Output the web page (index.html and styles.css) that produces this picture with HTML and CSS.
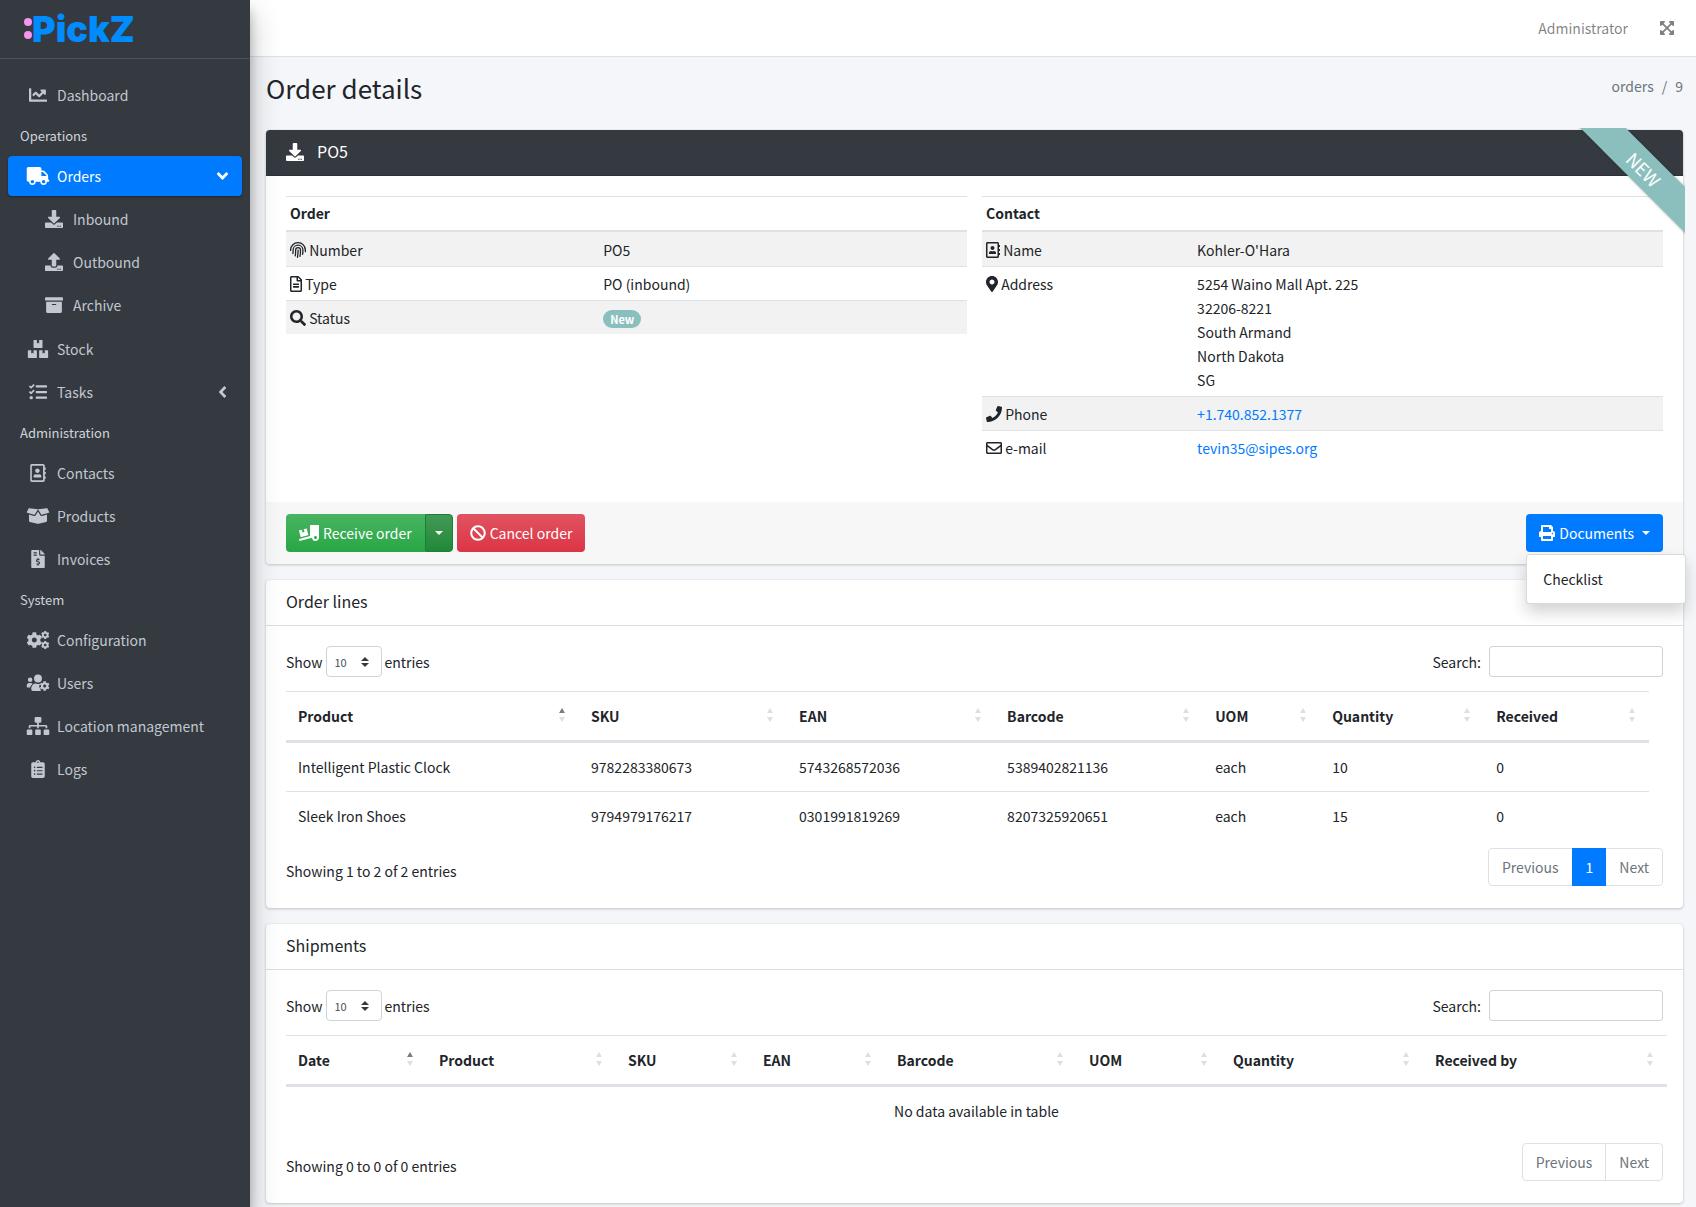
FILE: index.html
```html
<!DOCTYPE html>
<html lang="en">
<head>
    <meta charset="UTF-8">
    <meta name="viewport" content="width=device-width, initial-scale=1.0">
    <title>PickZ | Order details</title>
    <link rel="stylesheet" href="styles.css">
</head>
<body>
    <!-- shared icon shapes -->
    <svg class="sprite" aria-hidden="true">
        <symbol id="download" viewBox="0 0 512 512"><path d="M216 0h80c13.3 0 24 10.7 24 24v168h87.7c17.8 0 26.7 21.5 14.1 34.1L269.7 378.3c-7.5 7.5-19.8 7.5-27.3 0L90.1 226.1c-12.6-12.6-3.7-34.1 14.1-34.1H192V24c0-13.3 10.7-24 24-24zm296 376v112c0 13.3-10.7 24-24 24H24c-13.3 0-24-10.7-24-24V376c0-13.3 10.7-24 24-24h146.7l49 49c20.1 20.1 52.5 20.1 72.6 0l49-49H488c13.3 0 24 10.7 24 24zm-124 88c0-11-9-20-20-20s-20 9-20 20 9 20 20 20 20-9 20-20zm64 0c0-11-9-20-20-20s-20 9-20 20 9 20 20 20 20-9 20-20z"/></symbol>
        <symbol id="address-book" viewBox="0 0 448 512"><path d="M436 160c6.6 0 12-5.4 12-12v-40c0-6.6-5.4-12-12-12h-20V48c0-26.5-21.5-48-48-48H48C21.5 0 0 21.5 0 48v416c0 26.5 21.5 48 48 48h320c26.5 0 48-21.5 48-48v-48h20c6.6 0 12-5.4 12-12v-40c0-6.6-5.4-12-12-12h-20v-64h20c6.6 0 12-5.4 12-12v-40c0-6.6-5.4-12-12-12h-20v-64h20zm-68 304H48V48h320v416zM208 256c35.3 0 64-28.7 64-64s-28.7-64-64-64-64 28.7-64 64 28.7 64 64 64zm-89.6 128h179.2c12.4 0 22.4-8.6 22.4-19.2v-19.2c0-31.8-30.1-57.6-67.2-57.6-10.8 0-18.7 8-44.8 8-26.9 0-33.4-8-44.8-8-37.1 0-67.2 25.8-67.2 57.6v19.2c0 10.6 10 19.2 22.4 19.2z"/></symbol>
        <symbol id="angle" viewBox="0 0 256 512"><path d="M31.7 239l136-136c9.4-9.4 24.6-9.4 33.9 0l22.6 22.6c9.4 9.4 9.4 24.6 0 33.9L127.9 256l96.4 96.4c9.4 9.4 9.4 24.6 0 33.9L201.7 409c-9.4 9.4-24.6 9.4-33.9 0l-136-136c-9.5-9.4-9.5-24.6-.1-34z"/></symbol>
        <symbol id="cog" viewBox="0 0 512 512"><path d="M487.4 315.7l-42.6-24.6c4.3-23.2 4.3-47 0-70.2l42.6-24.6c4.9-2.8 7.1-8.6 5.5-14-11.1-35.6-30-67.8-54.7-94.6-3.8-4.1-10-5.1-14.8-2.3L380.8 110c-17.9-15.4-38.5-27.3-60.8-35.1V25.8c0-5.6-3.9-10.5-9.4-11.7-36.7-8.2-74.3-7.8-109.2 0-5.5 1.2-9.4 6.1-9.4 11.7V75c-22.2 7.9-42.8 19.8-60.8 35.1L88.7 85.5c-4.9-2.8-11-1.9-14.8 2.3-24.7 26.7-43.6 58.9-54.7 94.6-1.7 5.4.6 11.2 5.5 14L67.3 221c-4.3 23.2-4.3 47 0 70.2l-42.6 24.6c-4.9 2.8-7.1 8.6-5.5 14 11.1 35.6 30 67.8 54.7 94.6 3.8 4.1 10 5.1 14.8 2.3l42.6-24.6c17.9 15.4 38.5 27.3 60.8 35.1v49.2c0 5.6 3.9 10.5 9.4 11.7 36.7 8.2 74.3 7.8 109.2 0 5.5-1.2 9.4-6.1 9.4-11.7v-49.2c22.2-7.9 42.8-19.8 60.8-35.1l42.6 24.6c4.9 2.8 11 1.9 14.8-2.3 24.7-26.7 43.6-58.9 54.7-94.6 1.5-5.5-.7-11.3-5.6-14.1zM256 336c-44.1 0-80-35.9-80-80s35.9-80 80-80 80 35.9 80 80-35.9 80-80 80z"/></symbol>
    </svg>

    <aside class="sidebar">
        <a href="#" class="brand">
            <svg class="brand-dots" viewBox="0 0 8 22" aria-hidden="true"><circle cx="4" cy="4" r="4"/><circle cx="4" cy="17" r="4"/></svg>
            <span>PickZ</span>
        </a>
        <nav>
            <ul class="nav">
                <li><a href="#"><svg viewBox="0 0 512 512"><path d="M496 384H64V80c0-8.84-7.16-16-16-16H16C7.16 64 0 71.16 0 80v336c0 17.67 14.33 32 32 32h464c8.84 0 16-7.16 16-16v-32c0-8.84-7.16-16-16-16zM464 96H345.94c-21.38 0-32.09 25.85-16.97 40.97l32.4 32.4L288 242.75l-73.37-73.37c-12.5-12.5-32.76-12.5-45.25 0l-68.69 68.69c-6.25 6.25-6.25 16.38 0 22.63l22.62 22.62c6.25 6.25 16.38 6.25 22.63 0L192 237.25l73.37 73.37c12.5 12.5 32.76 12.5 45.25 0l96-96 32.4 32.4c15.12 15.12 40.97 4.41 40.97-16.97V112c.01-8.84-7.15-16-15.99-16z"/></svg><span>Dashboard</span></a></li>
                <li class="nav-header">Operations</li>
                <li>
                    <a href="#" class="active"><svg viewBox="0 0 640 512"><path d="M624 352h-16V243.9c0-12.7-5.1-24.9-14.1-33.9L494 110.1c-9-9-21.2-14.1-33.9-14.1H416V48c0-26.5-21.5-48-48-48H48C21.5 0 0 21.5 0 48v320c0 26.5 21.5 48 48 48h16c0 53 43 96 96 96s96-43 96-96h128c0 53 43 96 96 96s96-43 96-96h48c8.8 0 16-7.2 16-16v-32c0-8.8-7.2-16-16-16zM160 464c-26.5 0-48-21.5-48-48s21.5-48 48-48 48 21.5 48 48-21.5 48-48 48zm320 0c-26.5 0-48-21.5-48-48s21.5-48 48-48 48 21.5 48 48-21.5 48-48 48zm80-208H416V144h44.1l99.9 99.9V256z"/></svg><span>Orders</span><svg class="angle open" viewBox="0 0 256 512"><use href="#angle"/></svg></a>
                    <ul class="nav-sub">
                        <li><a href="#"><svg viewBox="0 0 512 512"><use href="#download"/></svg><span>Inbound</span></a></li>
                        <li><a href="#"><svg viewBox="0 0 512 512"><path d="M296 384h-80c-13.3 0-24-10.7-24-24V192h-87.7c-17.8 0-26.7-21.5-14.1-34.1L242.3 5.7c7.5-7.5 19.8-7.5 27.3 0l152.2 152.2c12.6 12.6 3.7 34.1-14.1 34.1H320v168c0 13.3-10.7 24-24 24zm216-8v112c0 13.3-10.7 24-24 24H24c-13.3 0-24-10.7-24-24V376c0-13.3 10.7-24 24-24h136v8c0 30.9 25.1 56 56 56h80c30.9 0 56-25.1 56-56v-8h136c13.3 0 24 10.7 24 24zm-124 88c0-11-9-20-20-20s-20 9-20 20 9 20 20 20 20-9 20-20zm64 0c0-11-9-20-20-20s-20 9-20 20 9 20 20 20 20-9 20-20z"/></svg><span>Outbound</span></a></li>
                        <li><a href="#"><svg viewBox="0 0 512 512"><path d="M32 448c0 17.7 14.3 32 32 32h384c17.7 0 32-14.3 32-32V160H32v288zm160-212c0-6.6 5.4-12 12-12h104c6.6 0 12 5.4 12 12v8c0 6.6-5.4 12-12 12H204c-6.6 0-12-5.4-12-12v-8zM480 32H32C14.3 32 0 46.3 0 64v48c0 8.8 7.2 16 16 16h480c8.8 0 16-7.2 16-16V64c0-17.7-14.3-32-32-32z"/></svg><span>Archive</span></a></li>
                    </ul>
                </li>
                <li><a href="#"><svg viewBox="0 0 576 512"><path d="M560 288h-80v96l-32-21.3-32 21.3v-96h-80c-8.8 0-16 7.2-16 16v192c0 8.8 7.2 16 16 16h224c8.8 0 16-7.2 16-16V304c0-8.8-7.2-16-16-16zm-384-64h224c8.8 0 16-7.2 16-16V16c0-8.8-7.2-16-16-16h-80v96l-32-21.3L256 96V0h-80c-8.8 0-16 7.2-16 16v192c0 8.8 7.2 16 16 16zm64 64h-80v96l-32-21.3L96 384v-96H16c-8.8 0-16 7.2-16 16v192c0 8.8 7.2 16 16 16h224c8.8 0 16-7.2 16-16V304c0-8.8-7.2-16-16-16z"/></svg><span>Stock</span></a></li>
                <li><a href="#"><svg viewBox="0 0 512 512"><path d="M139.61 35.5a12 12 0 0 0-17 0L58.93 98.81l-22.7-22.12a12 12 0 0 0-17 0L3.53 92.41a12 12 0 0 0 0 17l47.59 47.4a12.78 12.78 0 0 0 17.61 0l15.59-15.62L156.52 69a12.09 12.09 0 0 0 .09-17zm0 159.19a12 12 0 0 0-17 0l-63.68 63.72-22.7-22.1a12 12 0 0 0-17 0L3.53 252a12 12 0 0 0 0 17L51 316.5a12.77 12.77 0 0 0 17.6 0l15.7-15.69 72.2-72.22a12 12 0 0 0 .09-16.9zM64 368c-26.49 0-48.59 21.5-48.59 48S37.53 464 64 464a48 48 0 0 0 0-96zm432 16H208a16 16 0 0 0-16 16v32a16 16 0 0 0 16 16h288a16 16 0 0 0 16-16v-32a16 16 0 0 0-16-16zm0-320H208a16 16 0 0 0-16 16v32a16 16 0 0 0 16 16h288a16 16 0 0 0 16-16V80a16 16 0 0 0-16-16zm0 160H208a16 16 0 0 0-16 16v32a16 16 0 0 0 16 16h288a16 16 0 0 0 16-16v-32a16 16 0 0 0-16-16z"/></svg><span>Tasks</span><svg class="angle" viewBox="0 0 256 512"><use href="#angle"/></svg></a></li>
                <li class="nav-header">Administration</li>
                <li><a href="#"><svg viewBox="0 0 448 512"><use href="#address-book"/></svg><span>Contacts</span></a></li>
                <li><a href="#"><svg viewBox="0 0 640 512"><path d="M425.7 256c-16.9 0-32.8-9-41.4-23.4L320 126l-64.2 106.6c-8.7 14.5-24.6 23.5-41.5 23.5-4.5 0-9-.6-13.3-1.9L64 215v178c0 14.7 10 27.5 24.2 31l216.2 54.1c10.2 2.5 20.9 2.5 31 0L551.8 424c14.2-3.6 24.2-16.4 24.2-31V215l-137 39.1c-4.3 1.3-8.8 1.9-13.3 1.9zm212.6-112.2L586.8 41c-3.1-6.2-9.8-9.8-16.7-8.9L320 64l91.7 152.1c3.8 6.3 11.4 9.3 18.5 7.3l197.9-56.5c9.9-2.9 14.7-13.9 10.2-23.1zM53.2 41L1.7 143.8c-4.6 9.2.3 20.2 10.1 23l197.9 56.5c7.1 2 14.7-1 18.5-7.3L320 64 69.8 32.1c-6.9-.8-13.5 2.7-16.6 8.9z"/></svg><span>Products</span></a></li>
                <li><a href="#"><svg viewBox="0 0 384 512"><path d="M377 105L279.1 7c-4.5-4.5-10.6-7-17-7H256v128h128v-6.1c0-6.3-2.5-12.4-7-16.9zm-153 31V0H24C10.7 0 0 10.7 0 24v464c0 13.3 10.7 24 24 24h336c13.3 0 24-10.7 24-24V160H248c-13.2 0-24-10.8-24-24zM64 72c0-4.42 3.58-8 8-8h80c4.42 0 8 3.58 8 8v16c0 4.42-3.58 8-8 8H72c-4.42 0-8-3.58-8-8V72zm0 80v-16c0-4.42 3.58-8 8-8h80c4.42 0 8 3.58 8 8v16c0 4.42-3.58 8-8 8H72c-4.42 0-8-3.58-8-8zm144 263.88V440c0 4.42-3.58 8-8 8h-16c-4.42 0-8-3.58-8-8v-24.29c-11.29-.58-22.27-4.52-31.37-11.35-3.9-2.93-4.1-8.77-.57-12.14l11.75-11.21c2.77-2.64 6.89-2.76 10.13-.73 3.87 2.42 8.26 3.72 12.82 3.72h28.11c6.5 0 11.8-5.92 11.8-13.19 0-5.95-3.61-11.19-8.77-12.73l-45-13.5c-18.59-5.58-31.58-23.42-31.58-43.39 0-24.52 19.05-44.44 42.67-45.07V232c0-4.42 3.58-8 8-8h16c4.42 0 8 3.58 8 8v24.29c11.29.58 22.27 4.51 31.37 11.35 3.9 2.93 4.1 8.77.57 12.14l-11.75 11.21c-2.77 2.64-6.89 2.76-10.13.73-3.87-2.43-8.26-3.72-12.82-3.72h-28.11c-6.5 0-11.8 5.92-11.8 13.19 0 5.95 3.61 11.19 8.77 12.73l45 13.5c18.59 5.58 31.58 23.42 31.58 43.39 0 24.53-19.05 44.44-42.67 45.07z"/></svg><span>Invoices</span></a></li>
                <li class="nav-header">System</li>
                <li><a href="#"><svg viewBox="0 0 640 512"><use href="#cog" x="-12" y="30" width="456" height="456"/><use href="#cog" x="404" y="-8" width="242" height="242"/><use href="#cog" x="404" y="278" width="242" height="242"/></svg><span>Configuration</span></a></li>
                <li><a href="#"><svg viewBox="0 0 640 512"><circle cx="96" cy="160" r="64"/><circle cx="320" cy="128" r="112"/><path d="M168 284c-12-17-31-28-52-28H64c-35 0-64 29-64 64v32c0 18 14 32 32 32h66c7-42 32-78 70-100zM128 432c0-86 50-160 124-160h8c40 20 84 20 124 0h8l-34 56c-6 34 0 66 30 86v22c0 12 8 34 18 44H176c-27 0-48-21-48-48z"/><use href="#cog" x="368" y="200" width="284" height="284"/></svg><span>Users</span></a></li>
                <li><a href="#"><svg viewBox="0 0 640 512"><path d="M128 352H32c-17.67 0-32 14.33-32 32v96c0 17.67 14.33 32 32 32h96c17.67 0 32-14.33 32-32v-96c0-17.67-14.33-32-32-32zm-24-80h192v48h48v-48h192v48h48v-57.59c0-21.17-17.23-38.41-38.41-38.41H344v-64h40c17.67 0 32-14.33 32-32V32c0-17.67-14.33-32-32-32H256c-17.67 0-32 14.33-32 32v96c0 17.67 14.33 32 32 32h40v64H94.41C73.23 224 56 241.23 56 262.41V320h48v-48zm264 80h-96c-17.67 0-32 14.33-32 32v96c0 17.67 14.33 32 32 32h96c17.67 0 32-14.33 32-32v-96c0-17.67-14.33-32-32-32zm240 0h-96c-17.67 0-32 14.33-32 32v96c0 17.67 14.33 32 32 32h96c17.67 0 32-14.33 32-32v-96c0-17.67-14.33-32-32-32z"/></svg><span>Location management</span></a></li>
                <li><a href="#"><svg viewBox="0 0 384 512"><path d="M336 64h-80c0-35.3-28.7-64-64-64s-64 28.7-64 64H48C21.5 64 0 85.5 0 112v352c0 26.5 21.5 48 48 48h288c26.5 0 48-21.5 48-48V112c0-26.5-21.5-48-48-48zM96 424c-13.3 0-24-10.7-24-24s10.7-24 24-24 24 10.7 24 24-10.7 24-24 24zm0-96c-13.3 0-24-10.7-24-24s10.7-24 24-24 24 10.7 24 24-10.7 24-24 24zm0-96c-13.3 0-24-10.7-24-24s10.7-24 24-24 24 10.7 24 24-10.7 24-24 24zm96-192c13.3 0 24 10.7 24 24s-10.7 24-24 24-24-10.7-24-24 10.7-24 24-24zm128 368c0 4.4-3.6 8-8 8H168c-4.4 0-8-3.6-8-8v-16c0-4.4 3.6-8 8-8h144c4.4 0 8 3.6 8 8v16zm0-96c0 4.4-3.6 8-8 8H168c-4.4 0-8-3.6-8-8v-16c0-4.4 3.6-8 8-8h144c4.4 0 8 3.6 8 8v16zm0-96c0 4.4-3.6 8-8 8H168c-4.4 0-8-3.6-8-8v-16c0-4.4 3.6-8 8-8h144c4.4 0 8 3.6 8 8v16z"/></svg><span>Logs</span></a></li>
            </ul>
        </nav>
    </aside>

    <div class="wrapper">
        <header class="topbar">
            <a href="#">Administrator</a>
            <a href="#" aria-label="Full screen"><svg class="icon-expand" viewBox="0 0 448 512"><path d="M448 344v112a23.94 23.94 0 0 1-24 24H312c-21.39 0-32.09-25.9-17-41l36.2-36.2L224 295.6 116.77 402.9 153 439c15.09 15.1 4.39 41-17 41H24a23.94 23.94 0 0 1-24-24V344c0-21.4 25.89-32.1 41-17l36.19 36.2L184.46 256 77.18 148.7 41 185c-15.1 15.1-41 4.4-41-17V56a23.94 23.94 0 0 1 24-24h112c21.39 0 32.09 25.9 17 41l-36.2 36.2L224 216.4l107.23-107.3L295 73c-15.09-15.1-4.39-41 17-41h112a23.94 23.94 0 0 1 24 24v112c0 21.4-25.89 32.1-41 17l-36.19-36.2L263.54 256l107.28 107.3L407 327.1c15.1-15.2 41-4.5 41 16.9z"/></svg></a>
        </header>

        <main class="content">
            <div class="page-head">
                <h1>Order details</h1>
                <ol class="breadcrumb">
                    <li><a href="#">orders</a></li>
                    <li>9</li>
                </ol>
            </div>

            <section class="card">
                <div class="card-header dark">
                    <svg viewBox="0 0 512 512"><use href="#download"/></svg>
                    <h2>PO5</h2>
                </div>
                <div class="ribbon-wrapper"><div class="ribbon">NEW</div></div>
                <div class="card-body details">
                    <table class="info order-info">
                        <colgroup><col class="label-col"><col></colgroup>
                        <thead>
                            <tr><th colspan="2">Order</th></tr>
                        </thead>
                        <tbody>
                            <tr>
                                <td><svg class="finger" viewBox="0 0 512 512"><path d="M20 270C14 130 120 22 256 22s238 104 236 250v36M92 370c10-36 8-70 8-112 0-86 68-156 156-156s158 70 158 160c0 50-2 90-12 130M168 444c14-60 12-110 12-182 0-44 34-80 78-80s78 36 78 80c0 80-4 140-18 196M258 258c0 90-4 160-20 230"/></svg> Number</td>
                                <td>PO5</td>
                            </tr>
                            <tr>
                                <td><svg viewBox="0 0 384 512"><path d="M288 248v28c0 6.6-5.4 12-12 12H108c-6.6 0-12-5.4-12-12v-28c0-6.6 5.4-12 12-12h168c6.6 0 12 5.4 12 12zm-12 72H108c-6.6 0-12 5.4-12 12v28c0 6.6 5.4 12 12 12h168c6.6 0 12-5.4 12-12v-28c0-6.6-5.4-12-12-12zm108-188.1V464c0 26.5-21.5 48-48 48H48c-26.5 0-48-21.5-48-48V48C0 21.5 21.5 0 48 0h204.1C264.8 0 277 5.1 286 14.1L369.9 98c9 8.9 14.1 21.2 14.1 33.9zm-128-80V128h76.1L256 51.9zM336 464V176H232c-13.3 0-24-10.7-24-24V48H48v416h288z"/></svg> Type</td>
                                <td>PO (inbound)</td>
                            </tr>
                            <tr>
                                <td><svg viewBox="0 0 512 512"><path d="M505 442.7L405.3 343c-4.5-4.5-10.6-7-17-7H372c27.6-35.3 44-79.7 44-128C416 93.1 322.9 0 208 0S0 93.1 0 208s93.1 208 208 208c48.3 0 92.7-16.4 128-44v16.3c0 6.4 2.5 12.5 7 17l99.7 99.7c9.4 9.4 24.6 9.4 33.9 0l28.3-28.3c9.4-9.4 9.4-24.6.1-34zM208 336c-70.7 0-128-57.2-128-128 0-70.7 57.2-128 128-128 70.7 0 128 57.2 128 128 0 70.7-57.2 128-128 128z"/></svg> Status</td>
                                <td><span class="badge">New</span></td>
                            </tr>
                        </tbody>
                    </table>
                    <table class="info contact-info">
                        <colgroup><col class="label-col"><col></colgroup>
                        <thead>
                            <tr><th colspan="2">Contact</th></tr>
                        </thead>
                        <tbody>
                            <tr>
                                <td><svg viewBox="0 0 448 512"><use href="#address-book"/></svg> Name</td>
                                <td>Kohler-O'Hara</td>
                            </tr>
                            <tr>
                                <td><svg viewBox="0 0 384 512"><path d="M172.268 501.67C26.97 291.031 0 269.413 0 192 0 85.961 85.961 0 192 0s192 85.961 192 192c0 77.413-26.97 99.031-172.268 309.67-9.535 13.774-29.93 13.773-39.464 0zM192 272c44.183 0 80-35.817 80-80s-35.817-80-80-80-80 35.817-80 80 35.817 80 80 80z"/></svg> Address</td>
                                <td>5254 Waino Mall Apt. 225<br>32206-8221<br>South Armand<br>North Dakota<br>SG</td>
                            </tr>
                            <tr>
                                <td><svg viewBox="0 0 512 512"><path d="M493.4 24.6l-104-24c-11.3-2.6-22.9 3.3-27.5 13.9l-48 112c-4.2 9.8-1.4 21.3 6.9 28l60.6 49.6c-36 76.7-98.9 140.5-177.2 177.2l-49.6-60.6c-6.8-8.3-18.2-11.1-28-6.9l-112 48C3.9 366.5-2 378.1.6 389.4l24 104C27.1 504.2 36.7 512 48 512c256.1 0 464-207.5 464-464 0-11.2-7.7-20.9-18.6-23.4z"/></svg> Phone</td>
                                <td><a href="tel:+17408521377">+1.740.852.1377</a></td>
                            </tr>
                            <tr>
                                <td><svg viewBox="0 0 512 512"><path d="M464 64H48C21.49 64 0 85.49 0 112v288c0 26.51 21.49 48 48 48h416c26.51 0 48-21.49 48-48V112c0-26.51-21.49-48-48-48zm0 48v40.805c-22.422 18.259-58.168 46.651-134.587 106.49-16.841 13.247-50.201 45.072-73.413 44.701-23.208.375-56.579-31.459-73.413-44.701C106.18 199.465 70.425 171.067 48 152.805V112h416zM48 400V214.398c22.914 18.251 55.409 43.862 104.938 82.646 21.857 17.205 60.134 55.186 103.062 54.955 42.717.231 80.509-37.199 103.053-54.947 49.528-38.783 82.032-64.401 104.947-82.653V400H48z"/></svg> e-mail</td>
                                <td><a href="mailto:tevin35@sipes.org">tevin35@sipes.org</a></td>
                            </tr>
                        </tbody>
                    </table>
                </div>
                <div class="card-footer">
                    <div class="btn-group">
                        <button type="button" class="btn btn-success"><svg viewBox="0 0 640 512"><path d="M50.2 375.6c2.3 8.5 11.1 13.6 19.6 11.3l216.4-58c8.5-2.3 13.6-11.1 11.3-19.6l-49.7-185.5c-2.3-8.5-11.1-13.6-19.6-11.3L151 133.3l24.8 92.7-61.8 16.5-24.8-92.7-77.3 20.7C3.4 172.8-1.7 181.6.6 190.1l49.6 185.5zM384 0c-17.7 0-32 14.3-32 32v323.6L5.9 450c-4.3 1.2-6.8 5.6-5.6 9.8l12.6 46.3c1.2 4.3 5.6 6.8 9.8 5.6l393.7-107.4C418.8 464.1 467.6 512 528 512c61.9 0 112-50.1 112-112V0H384zm144 448c-26.5 0-48-21.5-48-48s21.5-48 48-48 48 21.5 48 48-21.5 48-48 48z"/></svg>Receive order</button>
                        <button type="button" class="btn btn-split" aria-label="More receive options"><span class="caret"></span></button>
                    </div>
                    <button type="button" class="btn btn-danger"><svg viewBox="0 0 512 512"><path d="M256 8C119.034 8 8 119.033 8 256s111.034 248 248 248 248-111.034 248-248S392.967 8 256 8zm130.108 117.892c65.448 65.448 70 165.481 20.677 235.637L150.47 105.216c70.204-49.356 170.226-44.735 235.638 20.676zM125.892 386.108c-65.448-65.448-70-165.481-20.677-235.637L361.53 406.784c-70.203 49.356-170.226 44.736-235.638-20.676z"/></svg>Cancel order</button>
                    <div class="dropdown">
                        <button type="button" class="btn btn-primary" aria-expanded="true"><svg viewBox="0 0 512 512"><path d="M448 192V77.25c0-8.49-3.37-16.62-9.37-22.63L393.37 9.37c-6-6-14.14-9.37-22.63-9.37H96C78.33 0 64 14.33 64 32v160c-35.35 0-64 28.65-64 64v112c0 8.84 7.16 16 16 16h48v96c0 17.67 14.33 32 32 32h320c17.67 0 32-14.33 32-32v-96h48c8.84 0 16-7.16 16-16V256c0-35.35-28.65-64-64-64zm-64 256H128v-96h256v96zm0-224H128V64h192v48c0 8.84 7.16 16 16 16h48v96zm48 72c-13.25 0-24-10.75-24-24 0-13.26 10.75-24 24-24s24 10.74 24 24c0 13.25-10.75 24-24 24z"/></svg>Documents<span class="caret"></span></button>
                        <div class="dropdown-menu">
                            <a href="#">Checklist</a>
                        </div>
                    </div>
                </div>
            </section>

            <section class="card">
                <div class="card-header"><h2>Order lines</h2></div>
                <div class="card-body">
                    <div class="table-tools">
                        <label>Show <select><option>10</option><option>25</option><option>50</option></select> entries</label>
                        <label>Search: <input type="search"></label>
                    </div>
                    <table class="data lines">
                        <thead>
                            <tr>
                                <th class="asc">Product</th>
                                <th>SKU</th>
                                <th>EAN</th>
                                <th>Barcode</th>
                                <th>UOM</th>
                                <th>Quantity</th>
                                <th>Received</th>
                            </tr>
                        </thead>
                        <tbody>
                            <tr>
                                <td>Intelligent Plastic Clock</td>
                                <td>9782283380673</td>
                                <td>5743268572036</td>
                                <td>5389402821136</td>
                                <td>each</td>
                                <td>10</td>
                                <td>0</td>
                            </tr>
                            <tr>
                                <td>Sleek Iron Shoes</td>
                                <td>9794979176217</td>
                                <td>0301991819269</td>
                                <td>8207325920651</td>
                                <td>each</td>
                                <td>15</td>
                                <td>0</td>
                            </tr>
                        </tbody>
                    </table>
                    <div class="table-foot">
                        <div>Showing 1 to 2 of 2 entries</div>
                        <div class="pagination">
                            <a href="#">Previous</a>
                            <a href="#" class="current">1</a>
                            <a href="#">Next</a>
                        </div>
                    </div>
                </div>
            </section>

            <section class="card">
                <div class="card-header"><h2>Shipments</h2></div>
                <div class="card-body">
                    <div class="table-tools">
                        <label>Show <select><option>10</option><option>25</option><option>50</option></select> entries</label>
                        <label>Search: <input type="search"></label>
                    </div>
                    <table class="data shipments">
                        <thead>
                            <tr>
                                <th class="asc">Date</th>
                                <th>Product</th>
                                <th>SKU</th>
                                <th>EAN</th>
                                <th>Barcode</th>
                                <th>UOM</th>
                                <th>Quantity</th>
                                <th>Received by</th>
                            </tr>
                        </thead>
                        <tbody>
                            <tr>
                                <td colspan="8" class="empty">No data available in table</td>
                            </tr>
                        </tbody>
                    </table>
                    <div class="table-foot">
                        <div>Showing 0 to 0 of 0 entries</div>
                        <div class="pagination">
                            <a href="#">Previous</a>
                            <a href="#">Next</a>
                        </div>
                    </div>
                </div>
            </section>
        </main>
    </div>
</body>
</html>
```
FILE: styles.css
```css
* {
    box-sizing: border-box;
}
body {
    display: flex;
    min-height: 100vh;
    margin: 0;
    background-color: #f4f6f9;
    color: #212529;
    font-family: "Source Sans Pro", "Noto Sans CJK SC", sans-serif;
    font-size: 14px;
    line-height: 24px;
}
a {
    color: #007bff;
    text-decoration: none;
}
ul, ol {
    list-style: none;
    margin: 0;
    padding: 0;
}
h1, h2 {
    margin: 0;
    font-weight: 400;
}
svg {
    fill: currentColor;
}
button, input, select {
    font-family: inherit;
}
.sprite {
    display: none;
}

/* Sidebar */
.sidebar {
    flex: none;
    width: 250px;
    background-color: #343a40;
    box-shadow: 0 14px 28px rgba(0,0,0,0.25), 0 10px 10px rgba(0,0,0,0.22);
    z-index: 10;
}
.brand {
    display: flex;
    align-items: center;
    height: 59px;
    padding: 0 24px;
    border-bottom: 1px solid #4b545c;
    color: #008cff;
    font-family: Inter, sans-serif;
    font-size: 36px;
    font-weight: 900;
}
.brand-dots {
    width: 8px;
    height: 22px;
    fill: #f794ec;
}
.sidebar nav {
    padding: 16px 8px;
}
.nav a {
    display: flex;
    align-items: center;
    height: 40px;
    margin-bottom: 3px;
    padding: 0 15px 0 17px;
    border-radius: 4px;
    color: #c2c7d0;
}
.nav a svg {
    width: 26px;
    height: 18px;
    margin-right: 6px;
}
.nav a .angle {
    width: 9px;
    margin: 0 0 0 auto;
}
.nav a .angle.open {
    transform: rotate(-90deg);
}
.nav a.active {
    background-color: #007bff;
    color: #fff;
    box-shadow: 0 1px 3px rgba(0,0,0,0.12), 0 1px 2px rgba(0,0,0,0.24);
}
.nav-header {
    padding: 7px 12px 9px;
    color: #d0d4db;
    font-size: 13px;
    line-height: 22px;
}
.nav-sub {
    padding: 0 0 1px 16px;
}

/* Top bar */
.wrapper {
    flex: 1;
    min-width: 0;
}
.topbar {
    display: flex;
    align-items: center;
    justify-content: flex-end;
    gap: 32px;
    height: 57px;
    padding-right: 22px;
    background-color: #fff;
    border-bottom: 1px solid #dee2e6;
}
.topbar a {
    color: rgba(0,0,0,0.5);
}
.icon-expand {
    display: block;
    width: 14px;
    height: 16px;
}

/* Content */
.content {
    padding: 0 13px 0 16px;
}
.page-head {
    display: flex;
    justify-content: space-between;
    align-items: flex-start;
    padding: 13px 0 25px;
}
.page-head h1 {
    font-size: 26px;
    line-height: 35px;
}
.breadcrumb {
    display: flex;
    padding-top: 4px;
    color: #6c757d;
}
.breadcrumb a {
    color: #6c757d;
}
.breadcrumb li + li::before {
    content: "/";
    padding: 0 8px;
}

/* Cards */
.card {
    position: relative;
    margin-bottom: 16px;
    background-color: #fff;
    border-radius: 4px;
    box-shadow: 0 0 1px rgba(0,0,0,0.125), 0 1px 3px rgba(0,0,0,0.2);
}
.card:last-child {
    margin-bottom: 0;
}
.card-header {
    display: flex;
    align-items: center;
    gap: 13px;
    padding: 11px 20px 13px;
    border-bottom: 1px solid rgba(0,0,0,0.125);
}
.card-header h2 {
    font-size: 16px;
    line-height: 21px;
}
.card-header.dark {
    background-color: #343a40;
    border-radius: 4px 4px 0 0;
    color: #fff;
}
.card-header.dark svg {
    width: 18px;
    height: 18px;
}
.card-body {
    padding: 20px;
}
.card-footer {
    display: flex;
    gap: 4px;
    padding: 12px 20px;
    background-color: #f7f7f7;
    border-radius: 0 0 4px 4px;
}
.ribbon-wrapper {
    position: absolute;
    top: -2px;
    right: -2px;
    width: 120px;
    height: 120px;
    overflow: hidden;
}
.ribbon {
    position: absolute;
    top: 25px;
    left: -1px;
    width: 160px;
    background-color: #8bbfbd;
    box-shadow: 0 0 3px rgba(0,0,0,0.3);
    color: #fff;
    font-size: 18px;
    line-height: 32px;
    text-align: center;
    transform: rotate(45deg);
}

/* Order and contact details */
.details {
    display: flex;
    align-items: flex-start;
    gap: 15px;
    padding-bottom: 38px;
}
.info {
    flex: 1;
    table-layout: fixed;
    border-spacing: 0;
}
.info th {
    padding: 4px 4px 5px;
    border-top: 1px solid #dee2e6;
    border-bottom: 2px solid #dee2e6;
    text-align: left;
}
.info td {
    padding: 5px 4px 4px;
    border-top: 1px solid #dee2e6;
    vertical-align: top;
}
.info tbody tr:first-child td {
    border-top-color: transparent;
}
.info tbody tr:nth-child(odd) {
    background-color: #f2f2f2;
}
.info svg {
    width: auto;
    height: 16px;
    vertical-align: -2px;
}
.info .finger {
    fill: none;
    stroke: currentColor;
    stroke-width: 42;
    stroke-linecap: round;
}
.info, .data {
    width: 100%;
}
.order-info .label-col {
    width: 46%;
}
.contact-info .label-col {
    width: 31%;
}
.badge {
    display: inline-block;
    padding: 0 7px;
    border-radius: 9px;
    background-color: #8bbfbd;
    color: #fff;
    font-size: 11px;
    font-weight: 700;
    line-height: 18px;
}

/* Buttons */
.btn {
    display: flex;
    align-items: center;
    gap: 4px;
    height: 38px;
    padding: 0 12px;
    border: 1px solid transparent;
    border-radius: 4px;
    color: #fff;
    font-size: 14px;
    line-height: 24px;
    cursor: pointer;
}
.btn svg {
    width: auto;
    height: 16px;
}
.btn-group {
    display: flex;
}
.btn-success {
    background: #28a745 linear-gradient(180deg, #48b461, #28a745) border-box;
    border-radius: 4px 0 0 4px;
}
.btn-split {
    padding: 0 9px;
    background: #218838 linear-gradient(180deg, #429a56, #218838) border-box;
    border-color: #1e7e34;
    border-radius: 0 4px 4px 0;
}
.btn-danger {
    background: #dc3545 linear-gradient(180deg, #e15361, #dc3545) border-box;
}
.btn-primary {
    background-color: #007bff;
}
.caret {
    border-top: 4px solid;
    border-left: 4px solid transparent;
    border-right: 4px solid transparent;
}
.btn-primary .caret {
    margin-left: 4px;
}
.dropdown {
    position: relative;
    margin-left: auto;
}
.dropdown-menu {
    position: absolute;
    top: 40px;
    left: 0;
    width: 160px;
    padding: 8px 0;
    background-color: #fff;
    border: 1px solid rgba(0,0,0,0.15);
    border-radius: 4px;
    box-shadow: 0 8px 16px rgba(0,0,0,0.18);
    z-index: 5;
}
.dropdown-menu a {
    display: block;
    padding: 4px 16px;
    color: #212529;
}

/* Data tables */
.table-tools {
    display: flex;
    justify-content: space-between;
    margin-bottom: 14px;
}
.table-tools label {
    display: flex;
    align-items: center;
    gap: 3px;
}
.table-tools select {
    appearance: none;
    width: 56px;
    height: 31px;
    padding: 0 8px;
    border: 1px solid #ced4da;
    border-radius: 4px;
    background: #fff url("data:image/svg+xml,%3Csvg xmlns='http://www.w3.org/2000/svg' viewBox='0 0 4 5'%3E%3Cpath fill='%23343a40' d='M2 0L0 2h4zm0 5L0 3h4z'/%3E%3C/svg%3E") no-repeat right 12px center / 8px 10px;
    color: #495057;
    font-size: 11px;
}
.table-tools input {
    width: 174px;
    height: 31px;
    margin-left: 5px;
    padding: 0 8px;
    border: 1px solid #ced4da;
    border-radius: 3px;
}
.data {
    table-layout: fixed;
    border-spacing: 0;
}
.data.lines {
    width: 99%;
}
.data.shipments {
    width: calc(100% + 4px);
}
.data th, .data td {
    padding: 12px;
    border-top: 1px solid #dee2e6;
    text-align: left;
}
.data th {
    position: relative;
    border-bottom: 3px solid #dee2e6;
}
.data tbody tr:first-child td {
    border-top: 0;
}
.data .empty {
    text-align: center;
}
/* sort arrows */
.data th::before, .data th::after {
    content: "";
    position: absolute;
    right: 14px;
    border-left: 3px solid transparent;
    border-right: 3px solid transparent;
    opacity: 0.15;
}
.data th::before {
    top: 16px;
    border-bottom: 5px solid #212529;
}
.data th::after {
    top: 25px;
    border-top: 5px solid #212529;
}
.data th.asc::before {
    opacity: 0.6;
}
.lines th:nth-child(1) { width: 293px; }
.lines th:nth-child(2),
.lines th:nth-child(3),
.lines th:nth-child(4) { width: 208px; }
.lines th:nth-child(5) { width: 117px; }
.lines th:nth-child(6) { width: 164px; }
.lines th:nth-child(7) { width: 165px; }
.shipments th:nth-child(1) { width: 141px; }
.shipments th:nth-child(2) { width: 189px; }
.shipments th:nth-child(3) { width: 135px; }
.shipments th:nth-child(4) { width: 134px; }
.shipments th:nth-child(5) { width: 192px; }
.shipments th:nth-child(6) { width: 144px; }
.shipments th:nth-child(7) { width: 202px; }
.shipments th:nth-child(8) { width: 244px; }
.table-foot {
    display: flex;
    justify-content: space-between;
    align-items: flex-end;
    padding: 8px 0 2px;
}
.table-foot > div:first-child {
    padding-bottom: 3px;
}
.pagination {
    display: flex;
    border: 1px solid #dee2e6;
    border-radius: 4px;
    line-height: 36px;
}
.pagination a {
    padding: 0 13px;
    color: #6c757d;
}
.pagination a + a {
    border-left: 1px solid #dee2e6;
}
.pagination a.current {
    margin: -1px 0;
    border-color: #007bff;
    background-color: #007bff;
    color: #fff;
    line-height: 38px;
}
.pagination a.current + a {
    border-left: 0;
}
```
